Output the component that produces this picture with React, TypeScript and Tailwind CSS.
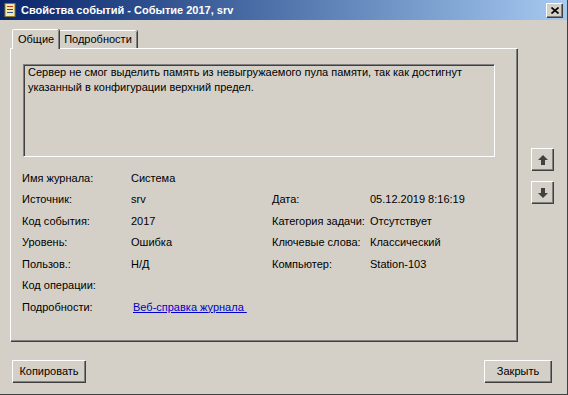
import React from "react";

const font = { fontFamily: "'Liberation Sans', Arial, sans-serif" };

const rows: Array<[string, string, string?, string?]> = [
  ["Имя журнала:", "Система"],
  ["Источник:", "srv", "Дата:", "05.12.2019 8:16:19"],
  ["Код события:", "2017", "Категория задачи:", "Отсутствует"],
  ["Уровень:", "Ошибка", "Ключевые слова:", "Классический"],
  ["Пользов.:", "Н/Д", "Компьютер:", "Station-103"],
  ["Код операции:", ""],
];

function ArrowButton({ down }: { down?: boolean }) {
  return (
    <div className="w-[22px] h-[22px] bg-[#d4d0c8] border-t border-l border-white shadow-[1px_1px_0_#404040,inset_-1px_-1px_0_#808080] flex items-center justify-center">
      <svg width="12" height="12" viewBox="0 0 12 12">
        {down ? (
          <path d="M4 1h4v5h3l-5 5-5-5h3z" fill="#404040" />
        ) : (
          <path d="M6 1l5 5H8v5H4V6H1z" fill="#404040" />
        )}
      </svg>
    </div>
  );
}

function Btn({ children, w }: { children: React.ReactNode; w: string }) {
  return (
    <div
      className={`${w} h-[22px] bg-[#d4d0c8] border-t border-l border-white shadow-[1px_1px_0_#404040,inset_-1px_-1px_0_#808080] flex items-center justify-center text-[11px] text-black`}
    >
      {children}
    </div>
  );
}

export default function App() {
  return (
    <div
      className="w-[568px] h-[395px] bg-[#d4d0c8] flex flex-col border-r border-b border-[#404040] overflow-hidden"
      style={font}
    >
      <div className="h-[20px] flex items-center bg-gradient-to-r from-[#0a246a] to-[#a6caf0] pl-[4px] pr-[5px]">
        <svg width="13" height="14" viewBox="0 0 13 14" className="mr-[4px]">
          <rect x="1" y="0.5" width="10" height="13" fill="#f4e9a8" stroke="#8a7a30" />
          <rect x="3" y="3" width="6" height="1" fill="#c03030" />
          <rect x="3" y="6" width="6" height="1" fill="#3050a0" />
          <rect x="3" y="9" width="6" height="1" fill="#3050a0" />
        </svg>
        <span className="text-white font-bold text-[11px] flex-1 whitespace-nowrap">Свойства событий - Событие 2017, srv</span>
        <div className="w-[16px] h-[14px] bg-[#d4d0c8] border-t border-l border-white shadow-[1px_1px_0_#404040,inset_-1px_-1px_0_#808080] flex items-center justify-center">
          <svg width="8" height="7" viewBox="0 0 8 7">
            <path d="M0.5 0.5 7.5 6.5M7.5 0.5 0.5 6.5" stroke="#000" strokeWidth="1.6" />
          </svg>
        </div>
      </div>

      <div className="flex pl-[10px] pt-[9px]">
        <div className="flex flex-col">
          <div className="flex items-end h-[19px] pl-[2px] text-[11px]">
            <div className="relative z-10 h-[20px] -mb-[1px] px-[5px] bg-[#d4d0c8] border-t border-l border-white shadow-[1px_0_0_#404040,inset_-1px_0_0_#808080] flex items-center rounded-t-[2px]">
              Общие
            </div>
            <div className="h-[18px] px-[5px] border-t border-white shadow-[1px_0_0_#404040,inset_-1px_0_0_#808080] flex items-center rounded-tr-[2px]">
              Подробности
            </div>
          </div>
          <div className="w-[507px] h-[293px] border-t border-l border-white shadow-[1px_1px_0_#404040,inset_-1px_-1px_0_#808080] pl-[11px] pt-[15px] text-[11px] text-black">
            <div className="w-[472px] h-[93px] ml-[1px] border-t border-l border-[#808080] border-b border-r border-b-white border-r-white shadow-[inset_1px_1px_0_#404040] px-[4px] pt-[0px] leading-[15px]">
              Сервер не смог выделить память из невыгружаемого пула памяти, так как достигнут указанный в конфигурации верхний предел.
            </div>
            <div className="mt-[10px] grid grid-cols-[109px_141px_98px_1fr] auto-rows-[21.5px] items-center whitespace-nowrap">
              {rows.map(([l1, v1, l2, v2]) => (
                <React.Fragment key={l1}>
                  <span>{l1}</span>
                  <span>{v1}</span>
                  <span>{l2 ?? ""}</span>
                  <span>{v2 ?? ""}</span>
                </React.Fragment>
              ))}
              <span>Подробности:</span>
              <span className="col-span-3 pl-[2px]">
                <span className="text-[#0000cc] underline">Веб-справка журнала&nbsp;</span>
              </span>
            </div>
          </div>
        </div>
        <div className="flex flex-col gap-[11px] ml-[14px] pt-[119px]">
          <ArrowButton />
          <ArrowButton down />
        </div>
      </div>

      <div className="flex justify-between pl-[12px] pr-[16px] mt-[19px]">
        <Btn w="w-[73px]">Копировать</Btn>
        <Btn w="w-[67px]">Закрыть</Btn>
      </div>
    </div>
  );
}
